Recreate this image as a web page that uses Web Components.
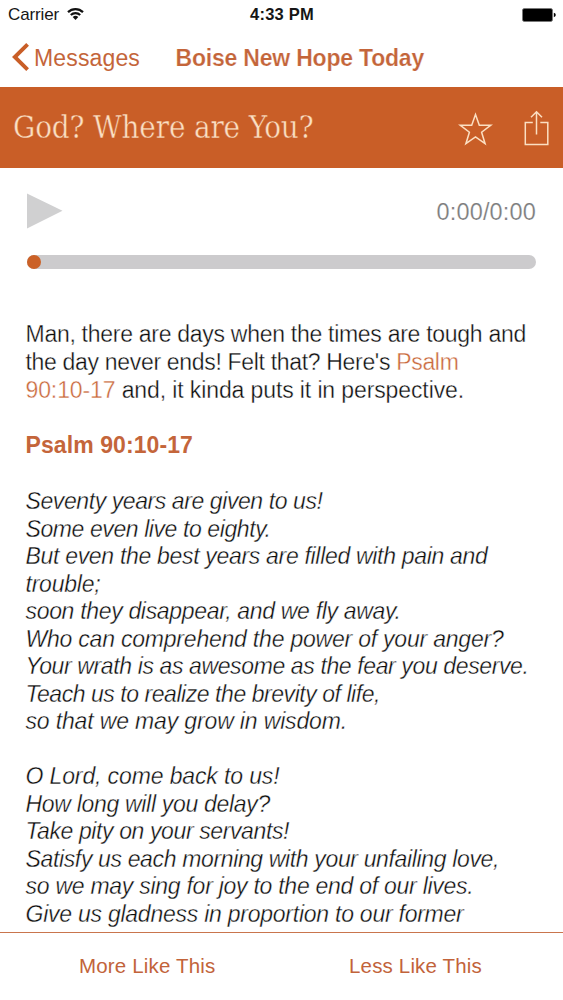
<!DOCTYPE html>
<html lang="en">
<head>
<meta charset="utf-8">
<title>Boise New Hope Today</title>
<style>
  body {
    margin: 0;
    background: #fff;
    font-family: "Liberation Sans", Arial, sans-serif;
    --accent: #c95e27;
    --accent-text: #c4653a;
    --cream: #fbdfc2;
  }
</style>
</head>
<body>
<message-app></message-app>

<script>
// One line of text, tracked out or in so that it spans the given width
class TextLine extends HTMLElement {
  constructor() {
    super()

    this.attachShadow({ mode: "open" })
    this.shadowRoot.innerHTML = `
      <style>
        :host { display: block; white-space: nowrap; }
        span { display: inline-block; }
      </style>
      <span><slot></slot></span>
    `
  }

  connectedCallback() {
    const width = Number(this.getAttribute("width"))
    const span = this.shadowRoot.querySelector("span")
    const count = this.textContent.length

    if (!width || !count) return

    const natural = span.getBoundingClientRect().width
    span.style.letterSpacing = `${(width - natural) / count}px`
  }
}

class StatusBar extends HTMLElement {
  constructor() {
    super()

    this.attachShadow({ mode: "open" })
  }

  connectedCallback() {
    this.shadowRoot.innerHTML = `
      <style>
        :host {
          display: grid;
          grid-template-columns: 1fr auto 1fr;
          align-items: center;
          height: 29px;
          padding: 0 7px 0 8px;
          box-sizing: border-box;
          font-size: 17px;
          line-height: 29px;
          color: #161616;
        }
        .carrier { display: flex; align-items: center; gap: 8px; }
        .carrier svg { margin-bottom: 2px; }
        .time { font-weight: bold; font-size: 16.5px; line-height: 27px; }
        .battery { justify-self: end; }
        svg { display: block; }
      </style>
      <div class="carrier">
        <text-line width="51">Carrier</text-line>
        <svg width="17" height="14" viewBox="0 0 17 14" fill="none" stroke="#111" stroke-width="2.2">
          <path d="M1 5.1a10.8 10.8 0 0 1 15 0"/>
          <path d="M3.8 8a6.8 6.8 0 0 1 9.4 0"/>
          <path d="M8.5 13 5.7 10.1a4 4 0 0 1 5.6 0z" fill="#111" stroke="none"/>
        </svg>
      </div>
      <text-line class="time" width="64">4:33 PM</text-line>
      <svg class="battery" width="34" height="14" viewBox="0 0 34 14">
        <rect x=".5" y=".5" width="30" height="13" rx="1.8" fill="#000" stroke="#777" stroke-width=".8"/>
        <path d="M31.8 4.8q2 .6 2 2.2t-2 2.2z" fill="#000"/>
      </svg>
    `
  }
}

class NavBar extends HTMLElement {
  constructor() {
    super()

    this.attachShadow({ mode: "open" })
  }

  connectedCallback() {
    this.shadowRoot.innerHTML = `
      <style>
        :host {
          display: flex;
          align-items: center;
          height: 58px;
          padding: 0 12px;
          box-sizing: border-box;
          font-size: 23px;
          line-height: 56px;
          color: var(--accent-text);
        }
        .back { display: flex; align-items: center; gap: 4px; width: 163.5px; }
        .title { font-weight: bold; font-size: 23px; -webkit-text-stroke: .2px #fff; }
        svg { display: block; margin-bottom: 3px; }
      </style>
      <div class="back">
        <svg width="18" height="28" viewBox="0 0 18 28" fill="none" stroke="var(--accent)" stroke-width="3.9">
          <path d="M15.6 1.4 2.8 14l12.8 12.6"/>
        </svg>
        <text-line width="106">${this.getAttribute("back")}</text-line>
      </div>
      <text-line class="title" width="248.5">${this.getAttribute("heading")}</text-line>
    `
  }
}

class MessageHeader extends HTMLElement {
  constructor() {
    super()

    this.attachShadow({ mode: "open" })
  }

  connectedCallback() {
    this.shadowRoot.innerHTML = `
      <style>
        :host {
          display: flex;
          align-items: center;
          height: 81px;
          padding: 0 14px 0 13px;
          box-sizing: border-box;
          background: var(--accent);
          color: var(--cream);
          font-family: "DejaVu Serif", serif;
          font-stretch: condensed;
          font-size: 31px;
          line-height: 81px;
        }
        text-line { flex: 1; -webkit-text-stroke: .4px var(--accent); }
        svg { display: block; fill: none; stroke: var(--cream); stroke-width: 1.5; }
        .star { margin: 3px 31px 0 0; }
        .share { margin-top: 1px; }
      </style>
      <text-line width="300.5">${this.getAttribute("heading")}</text-line>
      <svg class="star" width="35" height="34" viewBox="0 0 35 34">
        <path d="M17.5 2.4 21.3 13.2H32.9L23.6 20.2 27.1 31.7 17.5 24.8 7.9 31.7 11.4 20.2 2.1 13.2H13.7z"/>
      </svg>
      <svg class="share" width="25" height="36" viewBox="0 0 25 36">
        <path d="M8.8 12.5H1.3V34.6H23.8V12.5H16.3M12.5 24.5V2M7 7.3 12.5 1.8 18 7.3"/>
      </svg>
    `
  }
}

class AudioPlayer extends HTMLElement {
  constructor() {
    super()

    this.attachShadow({ mode: "open" })
  }

  connectedCallback() {
    this.shadowRoot.innerHTML = `
      <style>
        :host { display: block; padding: 25px 27px 0; height: 153px; box-sizing: border-box; }
        .controls { display: flex; justify-content: space-between; height: 36px; }
        .time { font-size: 23.5px; line-height: 38px; color: #7c7c7c; -webkit-text-stroke: .2px #fff; }
        .track { margin-top: 26px; height: 14px; border-radius: 7px; background: #cccbcd; }
        .knob { width: 14px; height: 14px; border-radius: 50%; background: #cb6127; }
        svg { display: block; }
      </style>
      <div class="controls">
        <svg width="36" height="36" viewBox="0 0 36 36"><path d="M0 .5 35.5 17.8 0 35.5z" fill="#d0d0d1"/></svg>
        <text-line class="time" width="99.5">0:00/0:00</text-line>
      </div>
      <div class="track"><div class="knob"></div></div>
    `
  }
}

class MessageBody extends HTMLElement {
  constructor() {
    super()

    this.attachShadow({ mode: "open" })
  }

  connectedCallback() {
    this.shadowRoot.innerHTML = `
      <style>
        :host {
          display: block;
          height: 611px;
          padding-left: 25.5px;
          box-sizing: border-box;
          overflow: hidden;
          font-size: 23px;
          line-height: 27.8px;
          color: #0c0c0c;
          -webkit-text-stroke: .35px #fff;
        }
        a { color: #c9683b; }
        h2 {
          margin: 28px 0 28.2px;
          font-size: 23px;
          line-height: 27.7px;
          color: #c4653a;
          -webkit-text-stroke: 0;
        }
        .stanza { margin-bottom: 27.5px; line-height: 27.5px; font-style: italic; }
      </style>
      <div>
        <text-line width="500.5">Man, there are days when the times are tough and</text-line>
        <text-line width="433">the day never ends! Felt that? Here's <a>Psalm</a></text-line>
        <text-line width="438.5"><a>90:10-17</a> and, it kinda puts it in perspective.</text-line>
      </div>
      <h2><text-line width="167.5">Psalm 90:10-17</text-line></h2>
      <div class="stanza">
        <text-line width="297">Seventy years are given to us!</text-line>
        <text-line width="245">Some even live to eighty.</text-line>
        <text-line width="462">But even the best years are filled with pain and</text-line>
        <text-line width="75">trouble;</text-line>
        <text-line width="375">soon they disappear, and we fly away.</text-line>
        <text-line width="478">Who can comprehend the power of your anger?</text-line>
        <text-line width="503">Your wrath is as awesome as the fear you deserve.</text-line>
        <text-line width="354.5">Teach us to realize the brevity of life,</text-line>
        <text-line width="321.5">so that we may grow in wisdom.</text-line>
      </div>
      <div class="stanza">
        <text-line width="254">O Lord, come back to us!</text-line>
        <text-line width="244.5">How long will you delay?</text-line>
        <text-line width="263.5">Take pity on your servants!</text-line>
        <text-line width="473.5">Satisfy us each morning with your unfailing love,</text-line>
        <text-line width="448">so we may sing for joy to the end of our lives.</text-line>
        <text-line width="438">Give us gladness in proportion to our former</text-line>
      </div>
    `
  }
}

class FeedbackBar extends HTMLElement {
  constructor() {
    super()

    this.attachShadow({ mode: "open" })
  }

  connectedCallback() {
    this.shadowRoot.innerHTML = `
      <style>
        :host {
          display: flex;
          justify-content: space-between;
          height: 68px;
          padding: 0 81px 0 79px;
          box-sizing: border-box;
          border-top: 1.5px solid #c9754d;
          font-size: 20.5px;
          line-height: 66px;
          color: #c2633a;
        }
      </style>
      <text-line width="136.5">More Like This</text-line>
      <text-line width="133">Less Like This</text-line>
    `
  }
}

class MessageApp extends HTMLElement {
  constructor() {
    super()

    this.attachShadow({ mode: "open" })
  }

  connectedCallback() {
    this.shadowRoot.innerHTML = `
      <style>
        :host { display: block; width: 563px; height: 1000px; overflow: hidden; background: #fff; }
      </style>
      <status-bar></status-bar>
      <nav-bar back="Messages" heading="Boise New Hope Today"></nav-bar>
      <message-header heading="God? Where are You?"></message-header>
      <audio-player></audio-player>
      <message-body></message-body>
      <feedback-bar></feedback-bar>
    `
  }
}

customElements.define("text-line", TextLine)
customElements.define("status-bar", StatusBar)
customElements.define("nav-bar", NavBar)
customElements.define("message-header", MessageHeader)
customElements.define("audio-player", AudioPlayer)
customElements.define("message-body", MessageBody)
customElements.define("feedback-bar", FeedbackBar)
customElements.define("message-app", MessageApp)
</script>
</body>
</html>
